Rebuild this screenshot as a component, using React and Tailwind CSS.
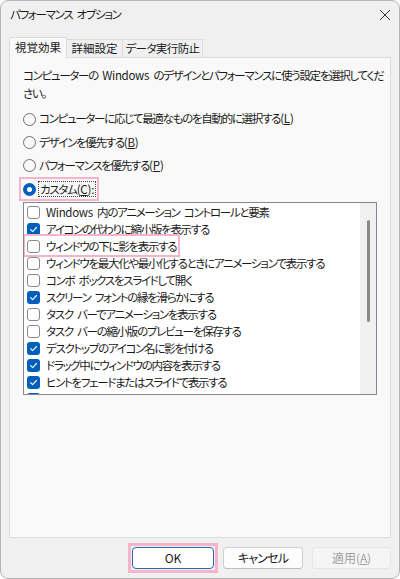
import React from 'react';

/**
 * PerformanceOptions - Windows 11 "パフォーマンス オプション" dialog, 視覚効果 tab.
 */

const items = [
  [<><span className="tracking-[-0.3px]">Windows</span> 内のアニメーション コントロールと要素</>, false],
  ['アイコンの代わりに縮小版を表示する', true],
  ['ウィンドウの下に影を表示する', false, true],
  ['ウィンドウを最大化や最小化するときにアニメーションで表示する', false],
  ['コンボ ボックスをスライドして開く', false],
  ['スクリーン フォントの縁を滑らかにする', true],
  ['タスク バーでアニメーションを表示する', false],
  ['タスク バーの縮小版のプレビューを保存する', false],
  ['デスクトップのアイコン名に影を付ける', true],
  ['ドラッグ中にウィンドウの内容を表示する', true],
  ['ヒントをフェードまたはスライドで表示する', true],
  ['ポインターの下に影を表示する', true],
];

const CheckBox = ({ checked }) =>
  checked ? (
    <span className="w-[13px] h-[13px] rounded-[3px] bg-[#005fb8] flex items-center justify-center shrink-0">
      <svg width="9" height="9" viewBox="0 0 9 9">
        <path d="M1.6 4.7 L3.6 6.6 L7.5 2.5" stroke="white" strokeWidth="1.1" fill="none" strokeLinecap="round" strokeLinejoin="round" />
      </svg>
    </span>
  ) : (
    <span className="w-[13px] h-[13px] rounded-[3px] border border-[#8a8a8a] bg-white shrink-0" />
  );

const Radio = ({ checked }) =>
  checked ? (
    <span className="w-[13px] h-[13px] rounded-full bg-[#005fb8] flex items-center justify-center shrink-0">
      <span className="w-[5px] h-[5px] rounded-full bg-white" />
    </span>
  ) : (
    <span className="w-[13px] h-[13px] rounded-full border border-[#6f6f6f] bg-[#f9f9f9] shrink-0" />
  );

const Accel = ({ k, tail = '' }) => (
  <span className="tracking-[-0.2px]">
    (<span className="underline">{k}</span>){tail}
  </span>
);

const RadioRow = ({ label, accel, h = 'h-[23px]' }) => (
  <div className={`flex items-center gap-[3px] ${h}`}>
    <Radio />
    <span>
      {label}
      <Accel k={accel} />
    </span>
  </div>
);

export default function App() {
  return (
    <div
      className="w-[400px] h-[579px] bg-[#f0f0f0] border border-[#b4b4b4] rounded-[8px] overflow-hidden flex flex-col text-[11.5px] tracking-[-1.3px] [word-spacing:3px] text-[#1a1a1a] whitespace-nowrap [font-feature-settings:'palt']"
      style={{ fontFamily: '"Noto Sans CJK JP", "Noto Sans", sans-serif' }}
    >
      {/* Title bar */}
      <div className="h-[28px] flex items-center justify-between pl-[9px] pr-[8px] shrink-0">
        <span>パフォーマンス オプション</span>
        <svg width="12" height="12" viewBox="0 0 12 12">
          <path d="M1 1 L11 11 M11 1 L1 11" stroke="#333" strokeWidth="1" />
        </svg>
      </div>

      {/* Tabs */}
      <div className="flex items-end pl-[8px] pt-[8px] mb-[-1px] relative z-10 shrink-0">
        <div className="h-[21px] w-[58px] flex items-center justify-center bg-[#f9f9f9] border border-b-0 border-[#dcdcdc] rounded-t-[2px] tracking-normal">
          視覚効果
        </div>
        <div className="h-[19px] w-[57px] -ml-[1px] flex items-center justify-center bg-[#f0f0f0] border border-[#dcdcdc] tracking-normal">
          詳細設定
        </div>
        <div className="h-[19px] w-[81px] -ml-[1px] flex items-center justify-center bg-[#f0f0f0] border border-[#dcdcdc] tracking-[-0.6px]">
          データ実行防止
        </div>
      </div>

      {/* Panel */}
      <div className="ml-[8px] w-[382px] h-[481px] bg-[#f9f9f9] border border-[#dcdcdc] pl-[13px] pt-[8px] flex flex-col shrink-0">
        <p className="leading-[18px]">
          コンピューターの <span className="tracking-[-0.3px]">Windows</span> のデザインとパフォーマンスに使う設定を選択してくだ
          <br />
          さい。
        </p>

        <div className="mt-[5px] flex flex-col">
          <RadioRow label="コンピューターに応じて最適なものを自動的に選択する" accel="L" h="h-[24px]" />
          <RadioRow label="デザインを優先する" accel="B" />
          <RadioRow label="パフォーマンスを優先する" accel="P" />
          <div className="self-start h-[24px] -ml-[4px] pl-[4px] pr-[3px] flex items-center gap-[2px] ring-2 ring-inset ring-[#f5b4cc]">
            <Radio checked />
            <span className="border border-dotted border-[#444] leading-[14px] px-[1px]">
              カスタム<Accel k="C" tail=":" />
            </span>
          </div>
        </div>

        {/* Check list */}
        <div className="mt-[1px] w-[354px] h-[193px] border border-[#828790] bg-white flex overflow-hidden">
          <div className="flex-1 pt-[1px] flex flex-col">
            {items.map(([label, checked, marked], i) => (
              <div key={i} className="relative h-[17px] shrink-0 flex items-center gap-[6px] pl-[3px]">
                <CheckBox checked={checked} />
                <span>{label}</span>
                {marked && (
                  <span className="absolute left-[-1px] top-[-4px] w-[157px] h-[23px] border-2 border-[#f5b4cc]" />
                )}
              </div>
            ))}
          </div>
          <div className="w-[16px] bg-[#f0f0f0] flex justify-center pt-[17px] shrink-0">
            <div className="w-[3px] h-[102px] rounded-full bg-[#8a8a8a] ml-[1px]" />
          </div>
        </div>
      </div>

      {/* Buttons */}
      <div className="flex justify-end items-center gap-[9px] pr-[8px] pt-[9px] shrink-0 tracking-normal">
        <div className="-m-[4px] border-[3px] border-[#f5b4cc] p-[1px] mr-[-4px]">
          <button className="w-[82px] h-[22px] bg-white border border-[#2b67a8] rounded-[4px] text-[12px]">
            OK
          </button>
        </div>
        <button className="w-[80px] h-[22px] bg-[#fdfdfd] border border-[#d0d0d0] border-b-[#bdbdbd] rounded-[4px] text-[12px] tracking-[-0.8px]">
          キャンセル
        </button>
        <button className="w-[79px] h-[22px] bg-[#f5f5f5] border border-[#e6e6e6] rounded-[4px] text-[12px] text-[#a0a0a0]">
          適用<Accel k="A" />
        </button>
      </div>
    </div>
  );
}
